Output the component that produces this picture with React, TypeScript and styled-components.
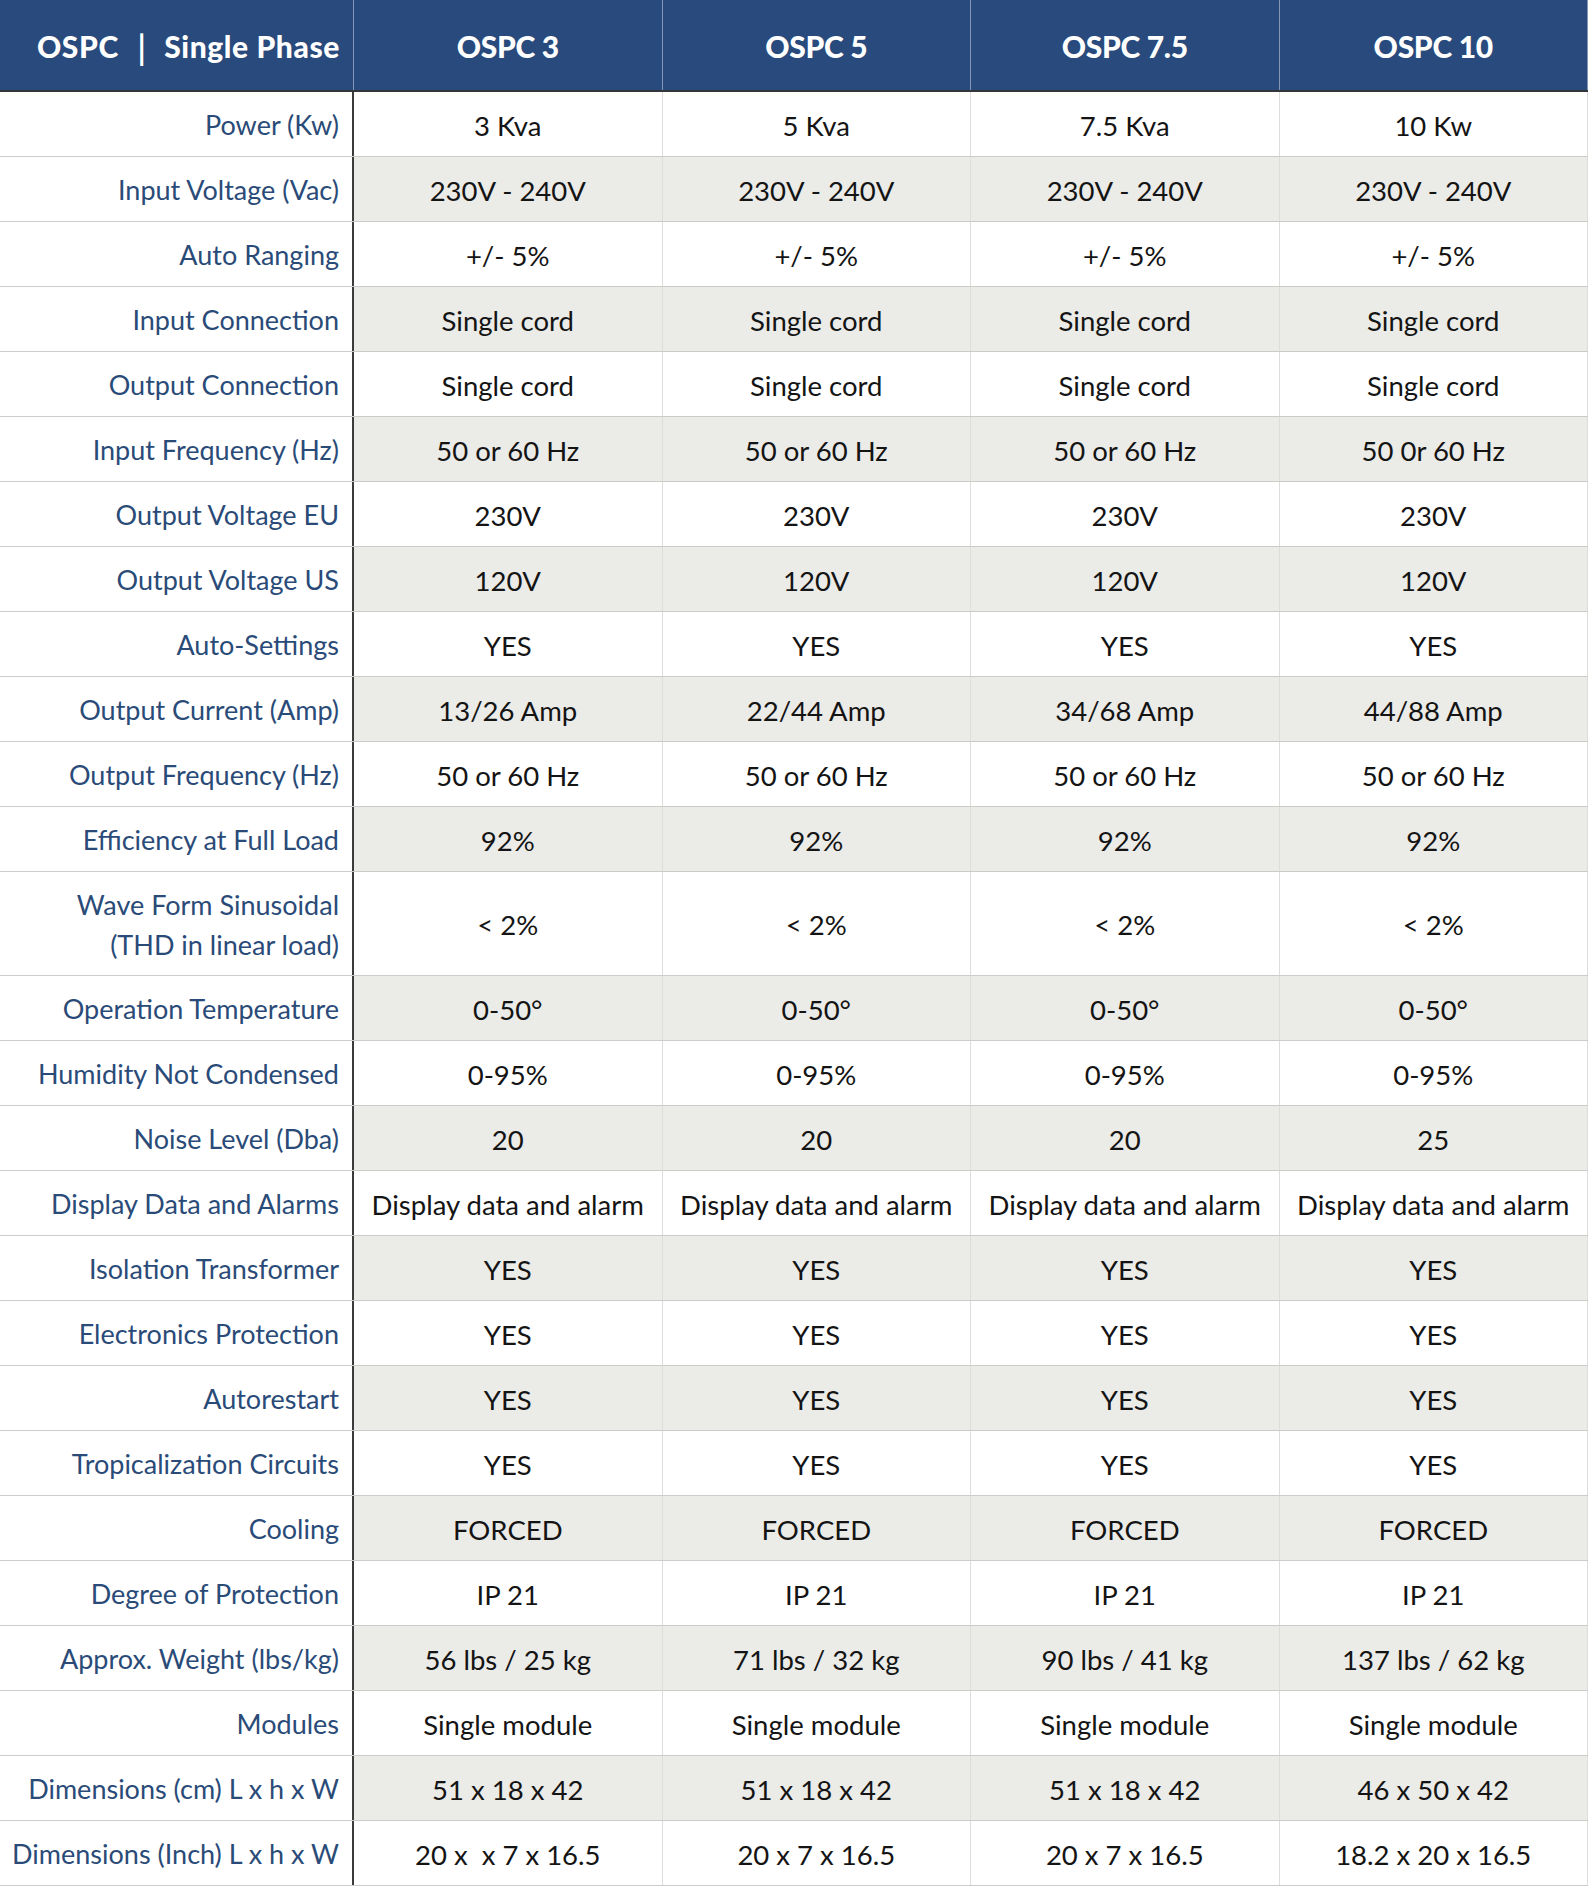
import React from "react";
import styled, { createGlobalStyle } from "styled-components";

const GlobalStyle = createGlobalStyle`
  html, body {
    margin: 0;
    padding: 0;
    background: #ffffff;
  }
  body {
    font-family: Lato, "Noto Sans", "Liberation Sans", sans-serif;
  }
`;

const Page = styled.div`
  width: 1592px;
  background: #ffffff;
`;

const Table = styled.div`
  width: 1588px;
  display: flex;
  flex-direction: column;
`;

const HeaderRow = styled.div`
  display: grid;
  grid-template-columns: 354px repeat(4, 1fr);
  height: 92px;
  background: #284a7c;
  border-bottom: 2px solid #333639;
  box-sizing: border-box;
`;

const HeaderCell = styled.div<{ $first?: boolean }>`
  display: flex;
  align-items: center;
  justify-content: ${(p) => (p.$first ? "flex-end" : "center")};
  padding: ${(p) => (p.$first ? "2px 13px 0 0" : "2px 0 0 0")};
  color: #ffffff;
  font-weight: 900;
  font-size: 30px;
  letter-spacing: ${(p) => (p.$first ? "0.6px" : "-0.3px")};
  white-space: pre;
  border-right: 1px solid #8496b4;
  box-sizing: border-box;
`;

const Pipe = styled.span`
  display: inline-block;
  margin: 0 18px 0 19px;
  font-weight: 700;
  transform: scaleY(1.15);
`;

const Row = styled.div<{ $shade: boolean; $tall?: boolean }>`
  display: grid;
  grid-template-columns: 354px repeat(4, 1fr);
  height: ${(p) => (p.$tall ? "104px" : "65px")};
  background: ${(p) => (p.$shade ? "#ebebe8" : "#ffffff")};
  border-bottom: 1px solid #cbcbca;
  box-sizing: border-box;
`;

const Label = styled.div`
  display: flex;
  align-items: center;
  justify-content: flex-end;
  text-align: right;
  padding: 2px 13px 0 0;
  color: #2a4b78;
  font-size: 27px;
  line-height: 40px;
  background: #ffffff;
  border-right: 2px solid #3b3b3b;
  box-sizing: border-box;
  white-space: pre-line;
`;

const Value = styled.div`
  display: flex;
  align-items: center;
  justify-content: center;
  padding-top: 2px;
  color: #141414;
  font-size: 27.5px;
  border-right: 1px solid #dddddc;
  box-sizing: border-box;
  white-space: pre;
`;

type Spec = { label: string; values: string[]; tall?: boolean };

const models = ["OSPC 3", "OSPC 5", "OSPC 7.5", "OSPC 10"];

const same = (v: string) => [v, v, v, v];

const specs: Spec[] = [
  { label: "Power (Kw)", values: ["3 Kva", "5 Kva", "7.5 Kva", "10 Kw"] },
  { label: "Input Voltage (Vac)", values: same("230V - 240V") },
  { label: "Auto Ranging", values: same("+/- 5%") },
  { label: "Input Connection", values: same("Single cord") },
  { label: "Output Connection", values: same("Single cord") },
  { label: "Input Frequency (Hz)", values: ["50 or 60 Hz", "50 or 60 Hz", "50 or 60 Hz", "50 0r 60 Hz"] },
  { label: "Output Voltage EU", values: same("230V") },
  { label: "Output Voltage US", values: same("120V") },
  { label: "Auto-Settings", values: same("YES") },
  { label: "Output Current (Amp)", values: ["13/26 Amp", "22/44 Amp", "34/68 Amp", "44/88 Amp"] },
  { label: "Output Frequency (Hz)", values: same("50 or 60 Hz") },
  { label: "Efficiency at Full Load", values: same("92%") },
  { label: "Wave Form Sinusoidal\n(THD in linear load)", values: same("< 2%"), tall: true },
  { label: "Operation Temperature", values: same("0-50°") },
  { label: "Humidity Not Condensed", values: same("0-95%") },
  { label: "Noise Level (Dba)", values: ["20", "20", "20", "25"] },
  { label: "Display Data and Alarms", values: same("Display data and alarm") },
  { label: "Isolation Transformer", values: same("YES") },
  { label: "Electronics Protection", values: same("YES") },
  { label: "Autorestart", values: same("YES") },
  { label: "Tropicalization Circuits", values: same("YES") },
  { label: "Cooling", values: same("FORCED") },
  { label: "Degree of Protection", values: same("IP 21") },
  { label: "Approx. Weight (lbs/kg)", values: ["56 lbs / 25 kg", "71 lbs / 32 kg", "90 lbs / 41 kg", "137 lbs / 62 kg"] },
  { label: "Modules", values: same("Single module") },
  { label: "Dimensions (cm) L x h x W", values: ["51 x 18 x 42", "51 x 18 x 42", "51 x 18 x 42", "46 x 50 x 42"] },
  { label: "Dimensions (Inch) L x h x W", values: ["20 x  x 7 x 16.5", "20 x 7 x 16.5", "20 x 7 x 16.5", "18.2 x 20 x 16.5"] },
];

export default function App() {
  return (
    <Page>
      <GlobalStyle />
      <Table>
        <HeaderRow>
          <HeaderCell $first>
            OSPC<Pipe>|</Pipe>Single Phase
          </HeaderCell>
          {models.map((m) => (
            <HeaderCell key={m}>{m}</HeaderCell>
          ))}
        </HeaderRow>
        {specs.map((s, i) => (
          <Row key={s.label} $shade={i % 2 === 1} $tall={s.tall}>
            <Label>{s.label}</Label>
            {s.values.map((v, j) => (
              <Value key={j}>{v}</Value>
            ))}
          </Row>
        ))}
      </Table>
    </Page>
  );
}
